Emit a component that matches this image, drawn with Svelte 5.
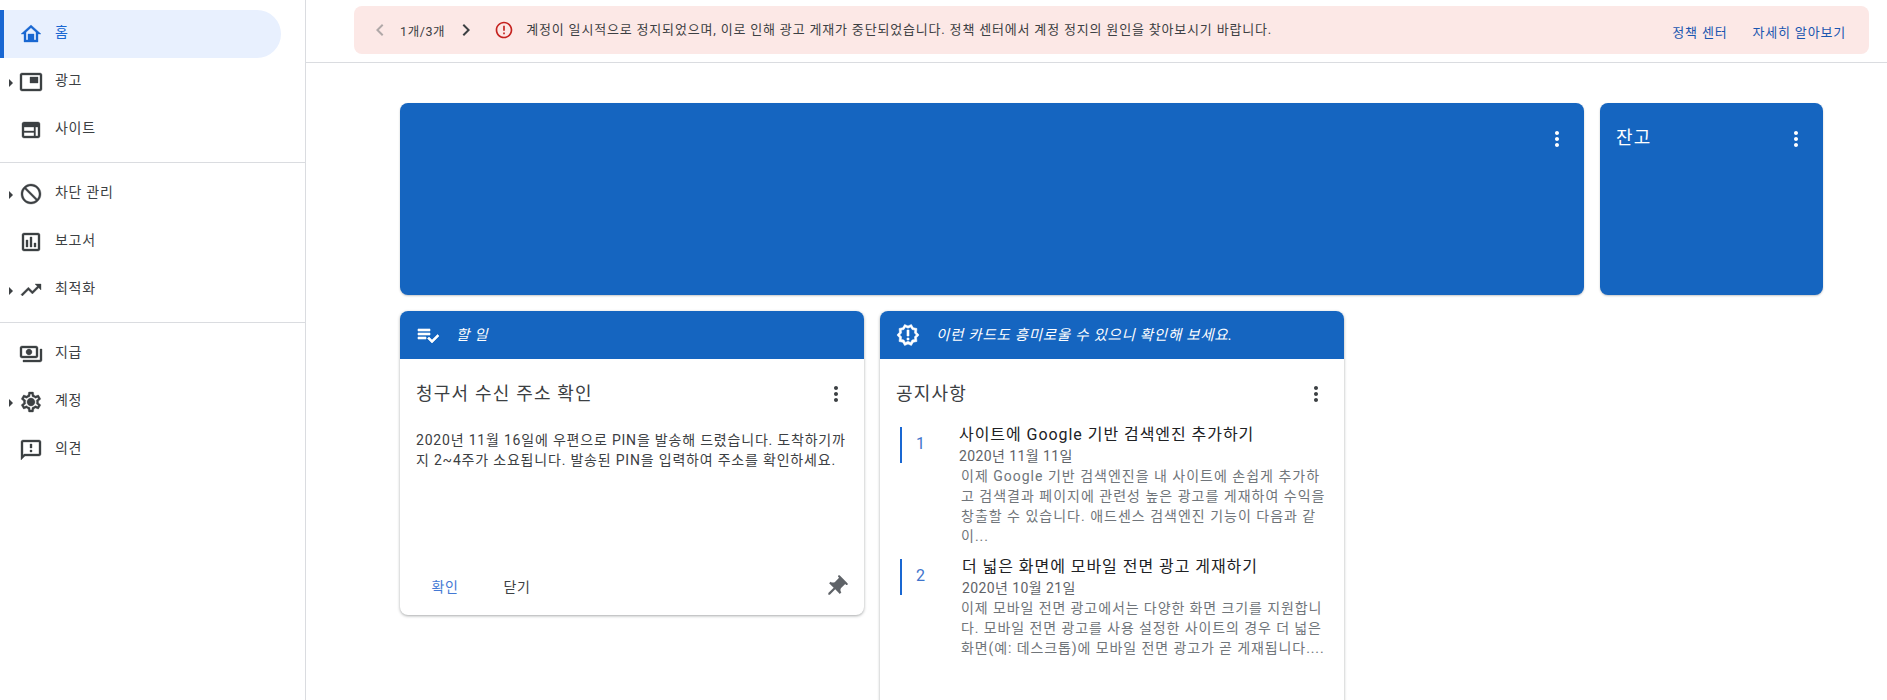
<script lang="ts">
	const paths: Record<string, string> = {
		home: 'M12 3L2 12h3v8h14v-8h3L12 3zm0 2.69l5 4.5V18h-2v-6H9v6H7v-7.81l5-4.5z',
		ads: 'M19 7h-8v6h8V7zm2-4H3c-1.1 0-2 .9-2 2v14c0 1.1.9 2 2 2h18c1.1 0 2-.9 2-2V5c0-1.1-.9-2-2-2zm0 16H3V5h18v14z',
		sites: 'M19 4H5c-1.1 0-2 .9-2 2v12c0 1.1.9 2 2 2h14c1.1 0 2-.9 2-2V6c0-1.1-.9-2-2-2zm-4 14H5v-3.5h10V18zm0-5H5V9h10v4zm4 5h-2.5V9H19v9z',
		block: 'M12 2C6.48 2 2 6.48 2 12s4.48 10 10 10 10-4.48 10-10S17.52 2 12 2zM4 12c0-1.85.63-3.55 1.69-4.9L16.9 18.31C15.55 19.37 13.85 20 12 20c-4.42 0-8-3.58-8-8zm14.31 4.9L7.1 5.69C8.45 4.63 10.15 4 12 4c4.42 0 8 3.58 8 8 0 1.85-.63 3.55-1.69 4.9z',
		reports: 'M19 3H5c-1.1 0-2 .9-2 2v14c0 1.1.9 2 2 2h14c1.1 0 2-.9 2-2V5c0-1.1-.9-2-2-2zm0 16H5V5h14v14zM7 10h2v7H7zm4-3h2v10h-2zm4 6h2v4h-2z',
		trend: 'M16 6l2.29 2.29-4.88 4.88-4-4L2 16.59 3.41 18l6-6 4 4 6.3-6.29L22 12V6z',
		pay: 'M19 14V6c0-1.1-.9-2-2-2H3c-1.1 0-2 .9-2 2v8c0 1.1.9 2 2 2h14c1.1 0 2-.9 2-2zm-2 0H3V6h14v8zm-7-7c-1.66 0-3 1.34-3 3s1.34 3 3 3 3-1.34 3-3-1.34-3-3-3zm13 0v11c0 1.1-.9 2-2 2H4v-2h17V7h2z',
		gear: 'M19.43 12.98c.04-.32.07-.64.07-.98s-.03-.66-.07-.98l2.11-1.65c.19-.15.24-.42.12-.64l-2-3.46c-.12-.22-.39-.3-.61-.22l-2.49 1c-.52-.4-1.08-.73-1.69-.98l-.38-2.65C14.46 2.18 14.25 2 14 2h-4c-.25 0-.46.18-.49.42l-.38 2.65c-.61.25-1.17.59-1.69.98l-2.49-1c-.23-.09-.49 0-.61.22l-2 3.46c-.13.22-.07.49.12.64l2.11 1.65c-.04.32-.07.65-.07.98s.03.66.07.98l-2.11 1.65c-.19.15-.24.42-.12.64l2 3.46c.12.22.39.3.61.22l2.49-1c.52.4 1.08.73 1.69.98l.38 2.65c.03.24.24.42.49.42h4c.25 0 .46-.18.49-.42l.38-2.65c.61-.25 1.17-.59 1.69-.98l2.49 1c.23.09.49 0 .61-.22l2-3.46c.12-.22.07-.49-.12-.64l-2.11-1.65zM17.45 11.27c.04.31.05.52.05.73s-.02.43-.05.73l-.14 1.13.89.7 1.08.84-.7 1.21-1.27-.51-1.04-.42-.9.68c-.43.32-.84.56-1.25.73l-1.06.43-.16 1.13-.2 1.35h-1.4l-.19-1.35-.16-1.13-1.06-.43c-.43-.18-.83-.41-1.23-.71l-.91-.7-1.06.43-1.27.51-.7-1.21 1.08-.84.89-.7-.14-1.13c-.03-.31-.05-.54-.05-.74s.02-.43.05-.73l.14-1.13-.89-.7-1.08-.84.7-1.21 1.27.51 1.04.42.9-.68c.43-.32.84-.56 1.25-.73l1.06-.43.16-1.13.2-1.35h1.39l.19 1.35.16 1.13 1.06.43c.43.18.83.41 1.23.71l.91.7 1.06-.43 1.27-.51.7 1.21-1.07.85-.89.7.14 1.13zM12 8c-2.21 0-4 1.79-4 4s1.79 4 4 4 4-1.79 4-4-1.79-4-4-4z',
		feedback: 'M20 2H4c-1.1 0-1.99.9-1.99 2L2 22l4-4h14c1.1 0 2-.9 2-2V4c0-1.1-.9-2-2-2zm0 14H5.17l-.59.59-.58.58V4h16v12zm-9-4h2v2h-2zm0-6h2v4h-2z',
		kebab: 'M12 8c1.1 0 2-.9 2-2s-.9-2-2-2-2 .9-2 2 .9 2 2 2zm0 2c-1.1 0-2 .9-2 2s.9 2 2 2 2-.9 2-2-.9-2-2-2zm0 6c-1.1 0-2 .9-2 2s.9 2 2 2 2-.9 2-2-.9-2-2-2z',
		left: 'M15.41 7.41L14 6l-6 6 6 6 1.41-1.41L10.83 12z',
		right: 'M10 6L8.59 7.41 13.17 12l-4.58 4.59L10 18l6-6z',
		error: 'M11 15h2v2h-2zm0-8h2v6h-2zm.99-5C6.47 2 2 6.48 2 12s4.47 10 9.99 10C17.52 22 22 17.52 22 12S17.52 2 11.99 2zM12 20c-4.42 0-8-3.58-8-8s3.58-8 8-8 8 3.58 8 8-3.58 8-8 8z',
		todo: 'M14 10H2v2h12v-2zm0-4H2v2h12V6zM2 16h8v-2H2v2zm19.5-4.5L23 13l-6.99 7-4.51-4.5L13 14l3.01 3 5.49-5.5z',
		newRelease: 'M23 12l-2.44-2.78.34-3.68-3.61-.82-1.89-3.18L12 3 8.6 1.54 6.71 4.72l-3.61.81.34 3.68L1 12l2.44 2.78-.34 3.69 3.61.82 1.89 3.18L12 21l3.4 1.46 1.89-3.18 3.61-.82-.34-3.68L23 12zm-4.51 1.65l.26 2.79-2.74.62-1.43 2.41L12 18.37l-2.58 1.1-1.43-2.41-2.74-.62.26-2.8L3.66 12l1.85-2.12-.26-2.78 2.74-.61 1.43-2.41L12 5.18l2.58-1.11 1.43 2.41 2.74.62-.26 2.79L20.34 12l-1.85 1.65zM11 15h2v2h-2zm0-8h2v6h-2z',
		pin: 'M16 9V4h1c.55 0 1-.45 1-1s-.45-1-1-1H7c-.55 0-1 .45-1 1s.45 1 1 1h1v5c0 1.66-1.34 3-3 3v2h5.97v7l1 1 1-1v-7H19v-2c-1.66 0-3-1.34-3-3z'
	};

	const navGroups = [
		[
			{ icon: 'home', label: '홈', active: true },
			{ icon: 'ads', label: '광고', arrow: true },
			{ icon: 'sites', label: '사이트' }
		],
		[
			{ icon: 'block', label: '차단 관리', arrow: true },
			{ icon: 'reports', label: '보고서' },
			{ icon: 'trend', label: '최적화', arrow: true }
		],
		[
			{ icon: 'pay', label: '지급' },
			{ icon: 'gear', label: '계정', arrow: true },
			{ icon: 'feedback', label: '의견' }
		]
	];

	const notices = [
		{
			n: 1,
			title: '사이트에 Google 기반 검색엔진 추가하기',
			date: '2020년 11월 11일',
			body: '이제 Google 기반 검색엔진을 내 사이트에 손쉽게 추가하고 검색결과 페이지에 관련성 높은 광고를 게재하여 수익을 창출할 수 있습니다. 애드센스 검색엔진 기능이 다음과 같이...'
		},
		{
			n: 2,
			title: '더 넓은 화면에 모바일 전면 광고 게재하기',
			date: '2020년 10월 21일',
			body: '이제 모바일 전면 광고에서는 다양한 화면 크기를 지원합니다. 모바일 전면 광고를 사용 설정한 사이트의 경우 더 넓은 화면(예: 데스크톱)에 모바일 전면 광고가 곧 게재됩니다....'
		}
	];
</script>

{#snippet icon(name: string, cls = '')}
	<svg class="icon {cls}" viewBox="0 0 24 24" aria-hidden="true"><path d={paths[name]} /></svg>
{/snippet}

<div class="page">
	<aside class="sidebar">
		{#each navGroups as group}
			<nav class="nav-group">
				{#each group as item}
					<div class="nav-item" class:active={item.active}>
						{#if item.arrow}<span class="arrow"></span>{/if}
						{@render icon(item.icon, 'nav-icon')}
						<span class="nav-label">{item.label}</span>
					</div>
				{/each}
			</nav>
		{/each}
	</aside>

	<main class="main">
		<header class="topbar">
			<div class="banner">
				{@render icon('left', 'pager-prev')}
				<span class="pager-text">1개/3개</span>
				{@render icon('right', 'pager-next')}
				{@render icon('error', 'banner-error')}
				<span class="banner-text">계정이 일시적으로 정지되었으며, 이로 인해 광고 게재가 중단되었습니다. 정책 센터에서 계정 정지의 원인을 찾아보시기 바랍니다.</span>
				<a class="banner-link" href="#policy">정책 센터</a>
				<a class="banner-link" href="#more">자세히 알아보기</a>
			</div>
		</header>

		<div class="content">
			<div class="top-row">
				<section class="blue-card wide">
					{@render icon('kebab', 'kebab')}
				</section>
				<section class="blue-card balance">
					<h2>잔고</h2>
					{@render icon('kebab', 'kebab')}
				</section>
			</div>

			<div class="card-row">
				<section class="card">
					<div class="card-head">
						{@render icon('todo', 'head-icon')}
						<em>할 일</em>
					</div>
					<div class="card-title">
						<h3>청구서 수신 주소 확인</h3>
						{@render icon('kebab', 'kebab')}
					</div>
					<p class="card-text">2020년 11월 16일에 우편으로 PIN을 발송해 드렸습니다. 도착하기까지 2~4주가 소요됩니다. 발송된 PIN을 입력하여 주소를 확인하세요.</p>
					<div class="card-actions">
						<button class="primary">확인</button>
						<button>닫기</button>
						{@render icon('pin', 'pin')}
					</div>
				</section>

				<section class="card tall">
					<div class="card-head">
						{@render icon('newRelease', 'head-icon')}
						<em>이런 카드도 흥미로울 수 있으니 확인해 보세요.</em>
					</div>
					<div class="card-title">
						<h3>공지사항</h3>
						{@render icon('kebab', 'kebab')}
					</div>
					<ol class="notices">
						{#each notices as notice}
							<li class="notice">
								<span class="notice-num">{notice.n}</span>
								<div class="notice-head">
									<div class="notice-title">{notice.title}</div>
									<div class="notice-date">{notice.date}</div>
								</div>
								<div class="notice-text">{notice.body}</div>
							</li>
						{/each}
					</ol>
				</section>
			</div>
		</div>
	</main>
</div>

<style>
	:global(body) {
		margin: 0;
		background: #fff;
		color: #3c4043;
		font-family: Roboto, 'Noto Sans CJK KR', sans-serif;
		font-size: 14px;
	}

	.page {
		display: flex;
		height: 700px;
		overflow: hidden;
	}

	.icon {
		display: block;
		flex: none;
		width: 24px;
		height: 24px;
		fill: currentColor;
	}

	.sidebar {
		flex: none;
		box-sizing: border-box;
		width: 306px;
		padding-top: 10px;
		border-right: 1px solid #dadce0;
	}

	.nav-group {
		padding-bottom: 8px;
		border-bottom: 1px solid #dadce0;
		margin-bottom: 7px;
	}

	.nav-group:last-child {
		border-bottom: 0;
	}

	.nav-item {
		position: relative;
		display: flex;
		align-items: center;
		gap: 12px;
		box-sizing: border-box;
		height: 48px;
		width: 281px;
		padding-left: 19px;
		color: #3c4043;
		letter-spacing: 0.7px;
	}

	.nav-item :global(.nav-icon) {
		stroke: currentColor;
		stroke-width: 0.35px;
	}

	.nav-label {
		margin-top: -6px;
	}

	.nav-item.active {
		border-left: 4px solid #1967d2;
		padding-left: 15px;
		border-radius: 0 24px 24px 0;
		background: #e8f0fe;
		color: #1967d2;
	}

	.arrow {
		position: absolute;
		left: 9px;
		top: 21px;
		border-left: 4px solid #3c4043;
		border-top: 4px solid transparent;
		border-bottom: 4px solid transparent;
	}

	.main {
		flex: 1;
		min-width: 0;
	}

	.topbar {
		box-sizing: border-box;
		height: 63px;
		padding: 6px 18px 0 48px;
		border-bottom: 1px solid #dadce0;
	}

	.banner {
		display: flex;
		align-items: center;
		box-sizing: border-box;
		height: 48px;
		padding: 0 23px 0 14px;
		border-radius: 8px;
		background: #fce8e6;
		font-size: 13px;
		letter-spacing: 0.82px;
		color: #3c4043;
	}

	.banner :global(.pager-prev) {
		color: #b0a8a8;
		width: 24px;
		height: 24px;
	}

	.pager-text {
		margin-left: 8px;
		font-size: 12.5px;
		letter-spacing: 0.6px;
	}

	.banner :global(.pager-next) {
		margin-left: 9px;
		width: 24px;
		height: 24px;
	}

	.banner :global(.banner-error) {
		margin-left: 16px;
		width: 20px;
		height: 20px;
		color: #c5221f;
	}

	.banner-text {
		margin-left: 12px;
		margin-top: -4px;
		flex: 1;
	}

	.banner-link {
		margin-left: 25px;
		margin-top: 2px;
		color: #1a56b0;
		text-decoration: none;
	}

	.content {
		padding: 40px 0 0 94px;
	}

	.top-row {
		display: flex;
		gap: 16px;
	}

	.blue-card {
		display: flex;
		justify-content: flex-end;
		box-sizing: border-box;
		height: 192px;
		padding: 24px 15px 0;
		border-radius: 8px;
		background: #1565c0;
		color: #fff;
		box-shadow: 0 1px 2px rgba(60, 64, 67, 0.3);
	}

	.blue-card.wide {
		width: 1184px;
	}

	.blue-card.balance {
		width: 223px;
		padding-left: 16px;
		justify-content: space-between;
	}

	.blue-card h2 {
		margin: 0;
		font-size: 18px;
		font-weight: 400;
		line-height: 22px;
		letter-spacing: 1.2px;
	}

	.card-row {
		display: flex;
		gap: 16px;
		align-items: flex-start;
		margin-top: 16px;
	}

	.card {
		display: flex;
		flex-direction: column;
		box-sizing: border-box;
		width: 464px;
		height: 304px;
		border-radius: 8px;
		overflow: hidden;
		background: #fff;
		box-shadow: 0 1px 3px rgba(60, 64, 67, 0.45);
	}

	.card.tall {
		height: 420px;
	}

	.card-head {
		display: flex;
		align-items: center;
		gap: 16px;
		flex: none;
		height: 48px;
		padding: 0 16px;
		background: #1565c0;
		color: #fff;
	}

	.card-head :global(.head-icon) {
		stroke: currentColor;
		stroke-width: 0.6px;
	}

	.card-head em {
		margin-top: -4px;
		font-size: 14.5px;
		letter-spacing: 0.7px;
	}

	.card-title {
		display: flex;
		align-items: center;
		justify-content: space-between;
		padding: 23px 16px 0;
	}

	.card-title h3 {
		margin: 0;
		font-size: 18px;
		font-weight: 400;
		color: #3c4043;
		line-height: 24px;
		letter-spacing: 1.2px;
	}

	.card-text {
		margin: 24px 16px 0;
		font-size: 14px;
		line-height: 20px;
		letter-spacing: 0.8px;
		color: #3c4043;
		flex: 1;
	}

	.card-actions {
		display: flex;
		align-items: center;
		padding: 0 16px 11px 9px;
	}

	.card-actions button {
		width: 72px;
		height: 36px;
		border: 0;
		padding: 0;
		background: none;
		font: inherit;
		letter-spacing: 0.6px;
		color: #3c4043;
	}

	.card-actions button.primary {
		color: #4479d4;
	}

	.card-actions :global(.pin) {
		margin-left: auto;
		width: 26px;
		height: 26px;
		color: #5f6368;
		transform: translate(1px, 1px) rotate(45deg);
	}

	.notices {
		margin: 21px 0 0;
		padding: 0 16px 0 20px;
		list-style: none;
	}

	.notice {
		display: grid;
		grid-template-columns: 59px 1fr;
		margin-bottom: 13px;
	}

	.notice-num {
		box-sizing: border-box;
		height: 36px;
		padding-left: 14px;
		border-left: 2px solid #1967d2;
		font-size: 16px;
		line-height: 34px;
		color: #3f74cc;
	}

	.notice-head {
		margin-top: -2px;
		height: 41px;
	}

	/* the wider "2" pushes this title over in the original */
	.notice:nth-child(2) .notice-head {
		margin-left: 3px;
	}

	.notice-title {
		font-size: 16px;
		line-height: 20px;
		letter-spacing: 0.95px;
		color: #202124;
	}

	.notice-date {
		margin-top: 1px;
		font-size: 14px;
		line-height: 20px;
		letter-spacing: 0.4px;
		color: #5f6368;
	}

	.notice-text {
		grid-column: 2;
		margin-left: 2px;
		font-size: 14px;
		line-height: 20px;
		letter-spacing: 1px;
		color: #70757a;
	}

	.notice:nth-child(2) .notice-text {
		margin-right: -5px;
		letter-spacing: 0.9px;
	}
</style>
